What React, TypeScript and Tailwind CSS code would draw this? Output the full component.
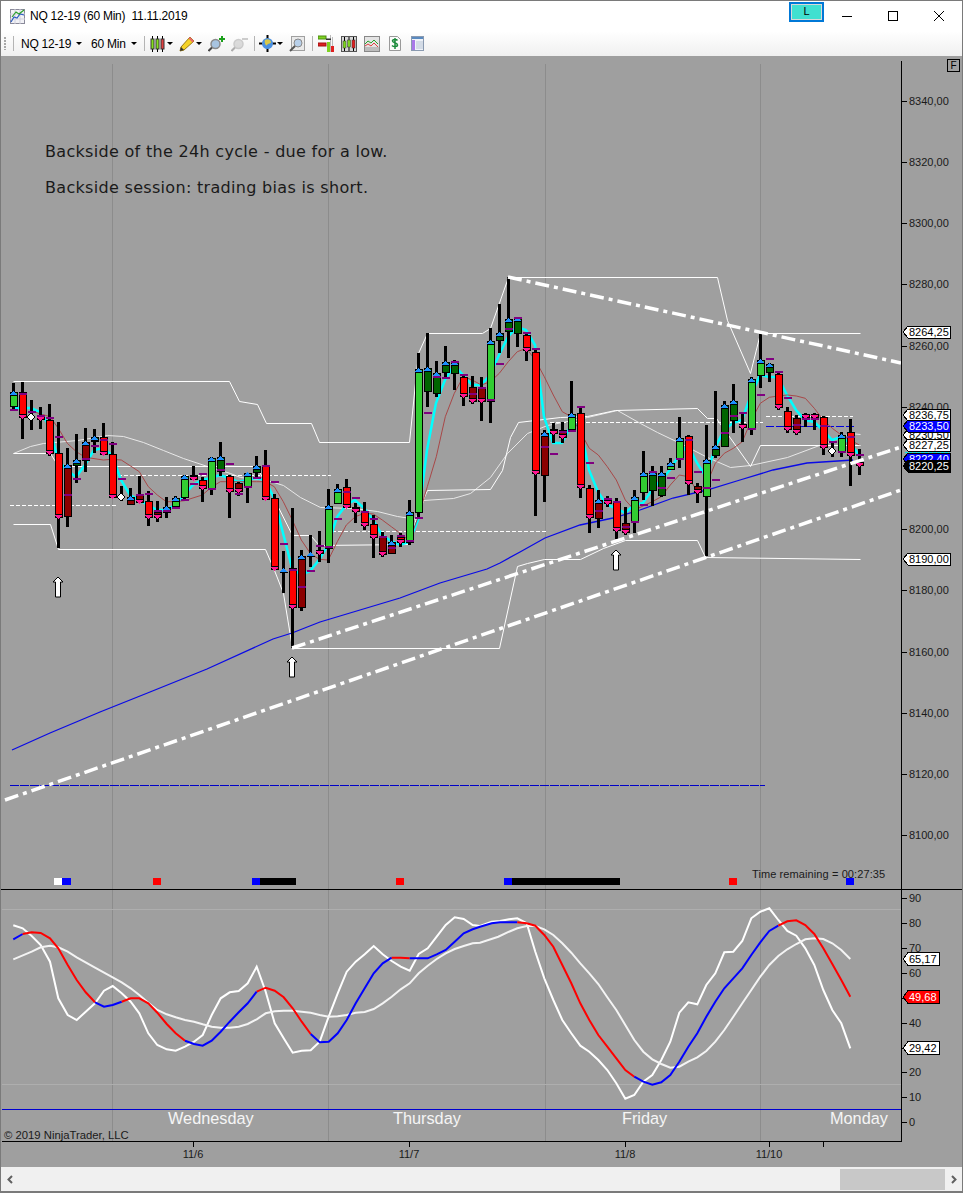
import React from 'react';

type Bar = [number, number, number, number, string, number];
type Pt = [number, number];

// [high, low, body top, body bottom, kind, purple dash y] in page pixels
// g green, G dark green, r red, R dark red, B dark red with up marker, d diamond, t tick only
const bars: Bar[] = [
  [383, 410, 392, 406, 'g', 410], [382, 439, 392, 417, 'r', 394], [400, 430, 417, 417, 'd', 412], [407, 429, 415, 419, 'r', 416],
  [404, 456, 420, 453, 'r', 418], [422, 548, 453, 517, 'r', 437], [448, 527, 465, 516, 'B', 495], [434, 483, 460, 465, 'G', 479],
  [428, 472, 442, 460, 'B', 459], [429, 453, 437, 441, 'G', 446], [423, 455, 437, 454, 'r', 440], [442, 497, 454, 497, 'r', 444],
  [486, 501, 497, 497, 'd', 479], [488, 504, 497, 504, 'B', 0], [476, 503, 495, 502, 'R', 495], [491, 526, 501, 517, 'r', 494],
  [501, 522, 512, 517, 'R', 511], [497, 518, 507, 512, 'G', 511], [496, 507, 498, 506, 'g', 508], [475, 501, 476, 497, 'g', 500],
  [466, 480, 475, 479, 'r', 484], [477, 502, 480, 488, 'r', 474], [457, 495, 458, 488, 'g', 489], [442, 476, 457, 471, 'G', 470],
  [475, 518, 476, 491, 'r', 464], [482, 496, 483, 491, 'R', 494], [473, 503, 473, 486, 'g', 487], [456, 477, 466, 472, 'G', 478],
  [450, 499, 466, 499, 'r', 466], [494, 570, 498, 569, 'r', 482], [551, 593, 569, 571, 't', 544], [508, 648, 568, 607, 'r', 570],
  [550, 611, 556, 607, 'B', 587], [535, 567, 553, 557, 't', 571], [531, 562, 550, 553, 'R', 546], [489, 563, 506, 548, 'g', 547],
  [484, 503, 489, 503, 'g', 519], [479, 508, 487, 507, 'r', 492], [503, 523, 507, 511, 'r', 498], [502, 530, 511, 525, 'r', 512],
  [515, 558, 524, 537, 'r', 519], [532, 557, 537, 554, 'R', 537], [535, 553, 542, 553, 'B', 548], [533, 547, 537, 542, 'r', 536],
  [500, 545, 512, 542, 'g', 541], [353, 517, 369, 512, 'g', 518], [333, 407, 368, 391, 'G', 413], [361, 397, 373, 393, 'G', 377],
  [346, 378, 362, 372, 'G', 378], [360, 390, 362, 373, 'G', 362], [375, 406, 377, 396, 'r', 375], [376, 404, 387, 401, 'R', 394],
  [377, 421, 387, 401, 'R', 388], [328, 423, 341, 401, 'g', 400], [304, 353, 333, 340, 'G', 364], [277, 358, 319, 331, 'G', 329],
  [317, 347, 318, 333, 'G', 318], [332, 361, 335, 350, 'r', 333], [350, 516, 352, 473, 'r', 349], [430, 502, 433, 475, 'B', 447],
  [423, 443, 429, 433, 'r', 454], [422, 443, 430, 437, 'R', 432], [381, 430, 414, 429, 'g', 431], [406, 498, 413, 487, 'r', 407],
  [485, 533, 488, 517, 'r', 463], [490, 528, 500, 518, 'B', 511], [496, 507, 499, 503, 'r', 499], [498, 539, 502, 530, 'r', 502],
  [507, 535, 523, 532, 'R', 527], [490, 533, 497, 522, 'g', 522], [451, 500, 473, 492, 'g', 505], [466, 506, 472, 490, 'G', 472],
  [466, 497, 473, 495, 'G', 488], [458, 470, 463, 469, 'g', 478], [417, 468, 438, 458, 'g', 459], [435, 495, 436, 483, 'r', 440],
  [483, 503, 486, 492, 'R', 472], [425, 556, 460, 496, 'g', 488], [391, 458, 446, 455, 'G', 480], [401, 447, 405, 446, 'G', 433],
  [384, 433, 401, 420, 'G', 416], [413, 442, 425, 427, 'r', 413], [377, 435, 379, 429, 'g', 429], [334, 388, 360, 375, 'g', 395],
  [363, 382, 364, 372, 'G', 359], [373, 410, 374, 407, 'r', 372], [407, 433, 411, 429, 'r', 398], [415, 435, 418, 432, 'R', 425],
  [413, 427, 414, 417, 'r', 419], [413, 430, 414, 417, 'r', 419], [416, 455, 417, 447, 'r', 426], [442, 457, 451, 451, 'd', 442],
  [432, 457, 435, 452, 'g', 452], [419, 486, 432, 455, 'r', 437], [449, 475, 462, 465, 'r', 455],
];

const barX = (i: number) => 13 + i * 9;

const z3 = (a: number[]): Pt[] => pairs(a).map(([x, y]) => [x / 3, 370 + y / 3]);
const z4 = (a: number[]): Pt[] => pairs(a).map(([x, y]) => [320 + x / 3, 270 + y / 3]);
const z5 = (a: number[]): Pt[] => pairs(a).map(([x, y]) => [640 + x / 3, 320 + y / 3]);
const o6 = (a: number[]): Pt[] => pairs(a).map(([x, y]) => [x / 3, 860 + y / 3]);
const o7 = (a: number[]): Pt[] => pairs(a).map(([x, y]) => [480 + x / 3, 860 + y / 3]);

function pairs(a: number[]): Pt[] {
  const out: Pt[] = [];
  for (let i = 0; i < a.length; i += 2) out.push([a[i], a[i + 1]]);
  return out;
}

const d = (p: Pt[]) => p.map(([x, y]) => `${x.toFixed(1)},${y.toFixed(1)}`).join(' ');

const cyan: Pt[] = [
  [13, 408], [22, 408], [31, 408], [40, 412], [49, 425], [58, 460], [67, 470], [76, 477], [85, 465], [94, 450], [103, 448], [112, 455],
  [121, 480], [130, 495], [139, 500], [148, 505], [157, 510], [166, 510], [175, 505], [184, 495], [193, 485], [202, 480], [211, 478],
  [220, 475], [229, 478], [238, 482], [247, 480], [256, 478], [265, 480], [274, 498], [283, 533], [292, 568], [301, 575], [310, 571],
  [319, 560], [328, 545], [337, 517], [346, 505], [355, 500], [364, 508], [373, 520], [382, 535], [391, 541], [400, 545], [409, 542],
  [418, 520], [427, 450], [436, 403], [445, 380], [454, 365], [463, 375], [472, 385], [481, 385], [490, 375], [499, 355], [508, 337],
  [517, 327], [526, 330], [535, 345], [544, 417], [553, 443], [562, 443], [571, 425], [580, 425], [589, 470], [598, 492], [607, 505],
  [616, 508], [625, 513], [634, 505], [643, 503], [652, 490], [661, 480], [670, 470], [679, 455], [688, 445], [697, 463], [706, 477],
  [715, 448], [724, 430], [733, 423], [742, 420], [751, 395], [760, 375], [769, 377], [778, 377], [787, 395], [796, 410], [805, 420],
  [814, 422], [823, 430], [832, 440], [841, 437], [850, 443], [859, 455],
];

const brown: Pt[] = [
  ...z3([100, 125, 150, 140, 175, 175, 202, 220, 229, 245, 256, 262, 310, 270, 337, 268, 364, 270, 418, 305, 445, 350, 472, 375, 499, 395, 526, 395, 553, 392, 607, 375, 634, 352, 661, 335, 688, 335, 769, 335, 796, 335, 823, 350, 850, 395, 877, 450, 904, 510, 931, 550, 958, 568]),
  ...z4([25, 870, 52, 815, 79, 765, 106, 740, 133, 730, 160, 732, 187, 750, 214, 770, 241, 790, 268, 812, 295, 740, 322, 650, 349, 560, 376, 440, 403, 370, 430, 320, 457, 330, 484, 345, 511, 335, 538, 310, 565, 275, 592, 245, 619, 235, 646, 270, 673, 320, 700, 375, 727, 425, 754, 440, 781, 485, 808, 535, 835, 555, 862, 590, 889, 630, 916, 690, 943, 720]),
  ...z5([37, 545, 64, 530, 91, 495, 118, 465, 145, 470, 172, 515, 199, 495, 226, 430, 253, 400, 280, 385, 307, 365, 334, 300, 361, 250, 388, 232, 415, 228, 442, 225, 469, 228, 496, 235, 523, 265, 550, 300, 577, 325, 604, 345, 631, 360, 658, 375]),
];

const blueMa: Pt[] = [
  [12, 750], [50, 733], [100, 712], [150, 692], [207, 669], [273, 639], [292, 633], [320, 622], [400, 598], [440, 583], [487, 569], [500, 563],
  [520, 552], [545, 538], [580, 525], [613, 518], [640, 510], [673, 498], [707, 490], [740, 480], [773, 470], [807, 463], [853, 460],
];

const bandTop: Pt[] = [[13, 381], [229, 381], [239, 401], [257, 404], [266, 423], [311, 423], [319, 442], [409, 442], [418, 353], [427, 333], [482, 333], [490, 328], [508, 277], [717, 277], [727, 320], [750, 373], [760, 333], [860, 333]];
const bandLow: Pt[] = [[13, 524], [50, 524], [58, 549], [265, 549], [274, 570], [283, 593], [292, 648], [499, 648], [517, 566], [527, 563], [544, 559], [580, 559], [603, 548], [625, 540], [697, 540], [705, 557], [860, 559]];
const bandMid: Pt[] = [[13, 453], [50, 453], [58, 466], [256, 466], [272, 495], [292, 535], [310, 535], [319, 545], [409, 544], [418, 510], [427, 490], [490, 489], [502, 470], [510, 437], [518, 422], [560, 417], [587, 416], [615, 410], [697, 408], [707, 418], [716, 418], [750, 466], [760, 445], [860, 445]];
const bandSmooth: Pt[] = [[13, 453], [30, 446], [43, 443], [77, 440], [107, 435], [123, 436], [143, 442], [163, 450], [183, 458], [210, 467], [230, 473], [240, 477], [267, 480], [283, 485], [300, 497], [320, 507], [353, 508], [377, 511], [397, 516], [417, 519], [423, 500], [453, 498], [470, 493], [490, 477], [507, 453], [527, 433], [547, 425], [587, 417], [617, 410], [640, 423], [657, 432], [680, 443], [707, 457], [730, 467], [750, 465], [787, 457], [827, 442], [850, 433], [860, 434]];

const fast: Pt[] = [
  ...o6([40, 196, 68, 205, 95, 228, 122, 255, 150, 305, 175, 415, 203, 465, 230, 480, 257, 455, 285, 430, 312, 392, 338, 378, 365, 400, 392, 425, 418, 460, 445, 520, 472, 555, 500, 568, 527, 572, 555, 560, 582, 545, 608, 525, 635, 465, 662, 415, 689, 397, 716, 393, 743, 370, 770, 320, 797, 395, 824, 490, 851, 535, 878, 578, 905, 572, 932, 571, 959, 545, 986, 470, 1013, 400, 1040, 335, 1067, 305, 1094, 283, 1121, 258, 1148, 283, 1175, 303, 1202, 320, 1229, 332, 1256, 282, 1283, 265, 1310, 230, 1337, 195, 1364, 172, 1391, 177, 1418, 195]),
  ...o7([0, 198, 35, 185, 60, 183, 87, 178, 112, 175, 140, 190, 166, 275, 193, 355, 220, 420, 247, 480, 274, 520, 301, 557, 328, 575, 355, 600, 382, 630, 409, 670, 436, 716, 463, 705, 490, 665, 517, 645, 544, 600, 571, 545, 598, 458, 625, 427, 652, 433, 679, 375, 706, 340, 733, 277, 760, 275, 787, 243, 814, 175, 841, 155, 868, 145, 895, 180, 922, 213, 949, 227, 976, 265, 1003, 315, 1030, 390, 1057, 450, 1084, 490, 1111, 565]),
];

const slow: Pt[] = [
  ...o6([40, 298, 95, 275, 122, 262, 150, 257, 175, 262, 203, 275, 230, 292, 285, 323, 338, 352, 365, 367, 392, 385, 418, 405, 445, 428, 472, 450, 500, 463, 527, 472, 555, 480, 582, 485, 608, 493, 635, 500, 662, 503, 689, 503, 716, 500, 743, 492, 770, 478, 797, 460, 824, 454, 851, 452, 878, 452, 905, 455, 932, 458, 959, 465, 986, 470, 1013, 469, 1040, 465, 1067, 458, 1094, 456, 1121, 447, 1148, 430, 1175, 410, 1202, 388, 1229, 370, 1256, 340, 1283, 317, 1310, 297, 1337, 280, 1364, 267, 1391, 258, 1418, 250]),
  ...o7([0, 248, 55, 230, 87, 215, 112, 205, 140, 198, 166, 198, 193, 208, 220, 225, 247, 250, 274, 278, 301, 310, 328, 340, 355, 372, 382, 412, 409, 450, 436, 495, 463, 540, 490, 575, 517, 598, 544, 612, 571, 623, 598, 620, 625, 605, 652, 592, 679, 573, 706, 545, 733, 510, 760, 470, 787, 430, 814, 390, 841, 350, 868, 315, 895, 288, 922, 268, 949, 252, 976, 238, 1003, 235, 1030, 237, 1057, 250, 1084, 270, 1111, 297]),
];

const RED = '#ff0000';
const BLUE = '#0000ff';
const signal: { c: string; p: Pt[] }[] = [
  { c: BLUE, p: o6([40, 238, 68, 222]) },
  { c: RED, p: o6([68, 222, 95, 217, 122, 219, 150, 235, 175, 265, 203, 315, 230, 360, 257, 397, 285, 427]) },
  { c: BLUE, p: o6([285, 427, 312, 440, 338, 435, 365, 425]) },
  { c: RED, p: o6([365, 425, 392, 415, 418, 415, 445, 430, 472, 458, 500, 492, 527, 520, 555, 542]) },
  { c: BLUE, p: o6([555, 542, 582, 552, 608, 557, 635, 542, 662, 515, 689, 485, 716, 457, 743, 430, 770, 395]) },
  { c: RED, p: o6([770, 395, 797, 383, 824, 392, 851, 412, 878, 445, 905, 485, 932, 522]) },
  { c: BLUE, p: o6([932, 522, 959, 547, 986, 545, 1013, 520, 1040, 480, 1067, 430, 1094, 385, 1121, 340, 1148, 310, 1175, 293]) },
  { c: RED, p: o6([1175, 293, 1202, 293, 1229, 295]) },
  { c: BLUE, p: [...o6([1229, 295, 1256, 295, 1283, 295, 1310, 283, 1337, 270, 1364, 245, 1391, 220, 1418, 208]), ...o7([0, 200, 35, 190, 60, 187, 87, 187, 112, 187])] },
  { c: RED, p: o7([112, 187, 140, 190, 166, 197, 193, 225, 220, 260, 247, 315, 274, 370, 301, 430, 328, 480, 355, 525, 382, 560, 409, 595, 436, 630, 463, 650]) },
  { c: BLUE, p: o7([463, 650, 490, 665, 517, 674, 544, 667, 571, 645, 598, 605, 625, 560, 652, 520, 679, 470, 706, 425, 733, 385, 760, 355, 787, 325, 814, 285, 841, 247, 868, 213, 895, 197]) },
  { c: RED, p: o7([895, 197, 922, 184, 949, 181, 976, 195, 1003, 222, 1030, 265, 1057, 312, 1084, 360, 1111, 410]) },
];

const priceLabels = [[8340, 101], [8320, 162], [8300, 223], [8280, 284], [8260, 346], [8240, 407], [8200, 529], [8180, 590], [8160, 652], [8140, 713], [8120, 774], [8100, 835]];
const oscLabels = [[90, 898], [80, 923], [70, 948], [60, 973], [40, 1023], [20, 1072], [10, 1097], [0, 1122]];
const gridX = [112, 328, 545, 760];
const strip = [
  [54, 8, '#ffffff'], [62, 9, '#0000ff'], [153, 8, '#ff0000'], [252, 8, '#0000ff'], [260, 36, '#000000'], [396, 8, '#ff0000'],
  [504, 8, '#0000ff'], [512, 108, '#000000'], [729, 8, '#ff0000'], [846, 8, '#0000ff'],
] as const;

const bodyFill: Record<string, string> = { g: '#32cd32', G: '#006400', r: '#ff0000', R: '#8b0000', B: '#8b0000' };

function Candle({ bar, i }: { bar: Bar; i: number }) {
  const [hi, lo, top, bot, kind, purple] = bar;
  const x = barX(i);
  const up = kind === 'g' || kind === 'G' || kind === 'B' || kind === 't';
  return (
    <g shapeRendering="crispEdges">
      <rect x={x - 1} y={hi} width={3} height={lo - hi} fill="#000" />
      {bodyFill[kind] && <rect x={x - 3} y={top} width={7} height={bot - top} fill={bodyFill[kind]} stroke="#000" />}
      {kind === 'd' && <polygon points={`${x},${top - 4} ${x + 4},${top} ${x},${top + 4} ${x - 4},${top}`} fill="#fff" stroke="#000" shapeRendering="auto" />}
      {kind !== 'd' && up && (
        <>
          <polygon points={`${x - 3},${top + 3} ${x + 4},${top + 3} ${x + 0.5},${top - 1}`} fill="#1e90ff" />
          <rect x={x - 3} y={top + 3} width={8} height={1} fill="#000" />
        </>
      )}
      {kind !== 'd' && !up && (
        <>
          <polygon points={`${x - 3},${bot - 2} ${x + 4},${bot - 2} ${x + 0.5},${bot + 2}`} fill="#ff1493" />
          <rect x={x - 3} y={bot - 3} width={8} height={1} fill="#000" />
        </>
      )}
      {purple > 0 && <rect x={x - 3} y={purple - 1} width={8} height={2} fill="#800080" />}
    </g>
  );
}

function UpArrow({ x, y }: { x: number; y: number }) {
  return <polygon points={`${x},${y} ${x + 5},${y + 5} ${x + 2.5},${y + 5} ${x + 2.5},${y + 20} ${x - 2.5},${y + 20} ${x - 2.5},${y + 5} ${x - 5},${y + 5}`} fill="#fff" stroke="#000" />;
}

function Flag({ y, h = 12, fill = '#fff', color = '#000', text, right = 950 }: { y: number; h?: number; fill?: string; color?: string; text: string; right?: number }) {
  return (
    <g>
      <polygon points={`903,${y} 908,${y - h / 2} ${right},${y - h / 2} ${right},${y + h / 2} 908,${y + h / 2}`} fill={fill} stroke="#000" shapeRendering="crispEdges" />
      <text x={909} y={y + 4} fontSize={11} fill={color}>{text}</text>
    </g>
  );
}

function Caret() {
  return <span className="w-0 h-0 border-x-[3px] border-x-transparent border-t-[3px] border-t-black" />;
}

function Separator({ className }: { className: string }) {
  return <span className={`w-px h-[15px] bg-[#b4b4b4] ${className}`} />;
}

function Magnifier({ plus, dim }: { plus?: boolean; dim?: boolean }) {
  return (
    <svg width="17" height="17" viewBox="0 0 17 17" className={dim ? 'opacity-40' : ''}>
      <circle cx="7.5" cy="9" r="4.5" fill={dim ? '#b0b0b0' : '#a8c4e0'} stroke="#8a8a8a" strokeWidth="1.5" />
      <line x1="4" y1="12.5" x2="0.5" y2="16" stroke="#444" strokeWidth="2" />
      {plus ? <path d="M11 4h6M14 1v6" stroke="#1aa01a" strokeWidth="2" /> : <path d="M11 4h6" stroke="#888" strokeWidth="2" />}
    </svg>
  );
}

const Icons = {
  title: (
    <svg width="15" height="15" viewBox="0 0 15 15">
      <rect x="0.5" y="0.5" width="14" height="14" fill="#f2f2f6" stroke="#8a8a9a" />
      <path d="M0 5h15M0 10h15M5 0v15M10 0v15" stroke="#d0d0dc" />
      <path d="M1 13 4 8 7 9 10 5 14 6" fill="none" stroke="#2a5bc0" strokeWidth="1.2" />
      <path d="M2 8 6 3 9 5 14 1" fill="none" stroke="#2aa02a" strokeWidth="1.2" />
    </svg>
  ),
  candles: (
    <svg width="15" height="16" viewBox="0 0 15 16">
      <path d="M2.500 0v16M7.500 0v16M12.500 0v16" stroke="#000" />
      <rect x="1" y="3" width="3" height="10" fill="#86e01e" stroke="#333" />
      <rect x="6" y="3" width="3" height="10" fill="#86e01e" stroke="#333" />
      <rect x="11" y="3" width="3" height="10" fill="#e04040" stroke="#333" />
    </svg>
  ),
  pencil: (
    <svg width="16" height="16" viewBox="0 0 16 16">
      <polygon points="11,1 15,5 5,14 1,15 2,11" fill="#f5d327" stroke="#9a7a10" />
      <polygon points="2,11 5,14 1,15" fill="#333" />
      <polygon points="11,1 15,5 13.5,6.5 9.5,2.5" fill="#e86a6a" />
    </svg>
  ),
  globe: (
    <svg width="17" height="17" viewBox="0 0 17 17">
      <path d="M8.5 0v17M0 8.5h17" stroke="#000" strokeWidth="2" />
      <circle cx="8.5" cy="8.5" r="5.5" fill="#4a90e2" />
      <path d="M6 5c3-2 6 0 6 2s-3 1-4 3-3-3-2-5z" fill="#d8c84a" />
    </svg>
  ),
  lens: (
    <svg width="16" height="16" viewBox="0 0 16 16">
      <rect x="2.5" y="0.5" width="13" height="14" fill="#eaeaea" stroke="#a0a0a0" />
      <circle cx="9" cy="7" r="4" fill="#b8d0ea" stroke="#8a8a8a" />
      <line x1="6" y1="10" x2="1" y2="15" stroke="#555" strokeWidth="2" />
    </svg>
  ),
  bars: (
    <svg width="16" height="17" viewBox="0 0 16 17">
      <path d="M12.5 0v17M14.5 2v14" stroke="#bbb" />
      <rect x="0" y="1" width="8" height="3" fill="#7ed321" stroke="#4a8a10" />
      <rect x="8" y="3.5" width="5" height="1.5" fill="#333" />
      <rect x="0" y="8" width="8" height="3" fill="#e02020" stroke="#a01010" />
      <rect x="9" y="7" width="3" height="10" fill="#7ed321" />
      <rect x="13" y="11" width="3" height="6" fill="#e02020" />
    </svg>
  ),
  frame: (
    <svg width="16" height="16" viewBox="0 0 16 16">
      <rect x="0.5" y="0.5" width="15" height="15" fill="#d8d8d8" stroke="#555" />
      <path d="M3.5 1v14M8 1v14M12.5 1v14" stroke="#000" />
      <rect x="2" y="5" width="3" height="7" fill="#7ed321" stroke="#333" strokeWidth="0.5" />
      <rect x="6.5" y="4" width="3" height="7" fill="#7ed321" stroke="#333" strokeWidth="0.5" />
      <rect x="11" y="4" width="3" height="8" fill="#e02020" stroke="#333" strokeWidth="0.5" />
    </svg>
  ),
  lines: (
    <svg width="16" height="16" viewBox="0 0 16 16">
      <rect x="0.5" y="0.5" width="15" height="15" fill="#e4e4e4" stroke="#888" />
      <rect x="1" y="11" width="14" height="4" fill="#bdbdbd" />
      <path d="M1 8 4 5 7 7 10 4 14 8" fill="none" stroke="#2aa02a" />
      <path d="M1 10 4 8 7 10 10 7 14 11" fill="none" stroke="#e04040" />
    </svg>
  ),
  dollar: (
    <svg width="12" height="15" viewBox="0 0 12 15">
      <path d="M0.5 0.5h8l3 3v11h-11z" fill="#fafafa" stroke="#999" />
      <path d="M8.5 4.5c-1-1.5-5-1.5-5 .5s5 1.500 5 4c0 2-4 2-5.500.5M6 2v11" fill="none" stroke="#1a8a3a" strokeWidth="1.5" />
    </svg>
  ),
  sheet: (
    <svg width="13" height="15" viewBox="0 0 13 15">
      <rect x="0.5" y="0.5" width="12" height="14" fill="#eef2f8" stroke="#8a9ab0" />
      <rect x="1" y="1" width="11" height="2" fill="#5a8ac0" />
      <rect x="1" y="4" width="3" height="10" fill="#a878e8" />
      <path d="M5 6h7M5 8h7M5 10h7M5 12h7" stroke="#b8c4d4" />
    </svg>
  ),
};

const App: React.FC = () => {
  return (
    <div className="relative w-[963px] h-[1193px] flex flex-col overflow-hidden border border-[#7a7a7a] border-b-2 bg-white text-black font-['Liberation_Sans',Arial,sans-serif]">
      {/* Title bar */}
      <div className="h-[30px] flex items-center bg-white">
        <span className="ml-[9px]">{Icons.title}</span>
        <span className="ml-[5px] text-[12px] tracking-[-0.24px] whitespace-pre">NQ 12-19 (60 Min)  11.11.2019</span>
        <span className="ml-auto mr-[138px] w-[35px] h-[20px] -mt-[9px] border-[2px] border-[#0078d7] bg-[#40e0d0] flex items-center justify-center text-[11px] outline outline-1 -outline-offset-3 outline-[#d8d8d8]">L</span>
      </div>
      <div className="absolute top-0 right-0 h-[30px] flex items-center">
        <span className="w-[46px] flex justify-center"><span className="w-[10px] h-px bg-black" /></span>
        <span className="w-[46px] flex justify-center"><span className="w-[10px] h-[10px] border border-black" /></span>
        <span className="w-[46px] flex justify-center">
          <svg width="10" height="10" viewBox="0 0 10 10"><path d="M0 0 10 10M10 0 0 10" stroke="#000" /></svg>
        </span>
      </div>

      {/* Toolbar */}
      <div className="h-[25px] flex items-center bg-linear-to-b from-white to-[#f0f0f0] text-[12px] tracking-[-0.24px]">
        <span className="ml-[3px] w-[2px] h-[13px] bg-[repeating-linear-gradient(#a8a8a8_0,#a8a8a8_2px,transparent_2px,transparent_3px)]" />
        <Separator className="ml-[7px]" />
        <span className="ml-[7px]">NQ 12-19</span>
        <span className="ml-[5px] flex"><Caret /></span>
        <span className="ml-[9px]">60 Min</span>
        <span className="ml-[5px] flex"><Caret /></span>
        <Separator className="ml-[7px]" />
        <span className="ml-[5px] flex">{Icons.candles}</span>
        <span className="ml-[2px] flex"><Caret /></span>
        <span className="ml-[6px] flex">{Icons.pencil}</span>
        <span className="ml-[1px] flex"><Caret /></span>
        <span className="ml-[6px] flex"><Magnifier plus /></span>
        <span className="ml-[6px] flex"><Magnifier dim /></span>
        <Separator className="ml-[6px]" />
        <span className="ml-[4px] flex">{Icons.globe}</span>
        <span className="ml-[1px] flex"><Caret /></span>
        <span className="ml-[6px] flex">{Icons.lens}</span>
        <Separator className="ml-[7px]" />
        <span className="ml-[5px] flex">{Icons.bars}</span>
        <span className="ml-[7px] flex">{Icons.frame}</span>
        <span className="ml-[7px] flex">{Icons.lines}</span>
        <span className="ml-[9px] flex">{Icons.dollar}</span>
        <span className="ml-[10px] flex">{Icons.sheet}</span>
      </div>

      {/* Price panel */}
      <div className="relative flex h-[833px] bg-[#9f9f9f]">
        <svg width={900} height={833} viewBox="1 56 900 833" className="block shrink-0">
          {gridX.map(x => <line key={x} x1={x + 0.5} x2={x + 0.5} y1={64} y2={889} stroke="#8c8c8c" shapeRendering="crispEdges" />)}
          <g transform="translate(0.5 0.5)" fill="none">
            <polyline points={d(bandSmooth)} stroke="#e8e8e8" />
            <polyline points={d(bandTop)} stroke="#ffffff" />
            <polyline points={d(bandLow)} stroke="#ffffff" />
            <polyline points={d(bandMid)} stroke="#ffffff" />
          </g>
          <path d="M10 505.500H116M118 475.500H331M332 531.500H548M550 422.500H763M766 416.500H853" stroke="#fff" strokeDasharray="4 2" shapeRendering="crispEdges" />
          <line x1={766} x2={855} y1={426.5} y2={426.5} stroke="#0000e0" strokeDasharray="8 2" shapeRendering="crispEdges" />
          <line x1={10} x2={765} y1={785.5} y2={785.5} stroke="#0000c8" strokeDasharray="9 1" shapeRendering="crispEdges" />
          <polyline points={d(blueMa)} fill="none" stroke="#0a0ae6" strokeWidth={1.3} />
          <polyline points={d(cyan)} fill="none" stroke="#00ffff" strokeWidth={2.5} />
          <polyline points={d(brown)} fill="none" stroke="#a84848" />
          {bars.map((b, i) => <Candle key={i} bar={b} i={i} />)}
          <g stroke="#fff" strokeWidth={3.5} strokeDasharray="14 5 4 5">
            <line x1={292} y1={648} x2={901} y2={447} />
            <line x1={5} y1={800} x2={901} y2={490} />
            <line x1={508} y1={277} x2={901} y2={363} />
          </g>
          <UpArrow x={58} y={577} />
          <UpArrow x={292} y={657} />
          <UpArrow x={616} y={550} />
          {strip.map(([x, w, c]) => <rect key={x} x={x} y={878} width={w} height={7} fill={c} shapeRendering="crispEdges" />)}
        </svg>
        <svg width={61} height={833} viewBox="901 56 61 833" className="block shrink-0">
          <line x1={901.5} x2={901.5} y1={61} y2={889} stroke="#000" />
          {priceLabels.map(([v, y]) => (
            <g key={v}>
              <line x1={901} x2={907} y1={y + 0.5} y2={y + 0.5} stroke="#000" />
              <text x={909} y={y + 4} fontSize={11} fill="#1a1a1a">{`${v},00`}</text>
            </g>
          ))}
          <Flag y={332} text="8264,25" />
          <Flag y={559} text="8190,00" />
          <Flag y={415} text="8236,75" />
          <Flag y={435} text="8230,50" />
          <Flag y={426} fill="#0000ff" color="#fff" text="8233,50" />
          <Flag y={445} text="8227,25" />
          <line x1={905} x2={950} y1={452.5} y2={452.5} stroke="#00e5e5" strokeDasharray="3 1" />
          <Flag y={459} fill="#0000ff" color="#fff" text="8222,40" />
          <Flag y={466} fill="#000" color="#fff" text="8220,25" />
          <rect x={947.5} y={59.5} width={12} height={12} fill="none" stroke="#000" shapeRendering="crispEdges" />
          <text x={953.500} y={69} fontSize={10} textAnchor="middle">F</text>
        </svg>

        <div className="absolute left-[44px] top-[86px] flex flex-col gap-[16px] text-[16px] leading-[20px] tracking-[0.31px] text-[#1a1a1a] font-['DejaVu_Sans',sans-serif]">
          <p>Backside of the 24h cycle - due for a low.</p>
          <p>Backside session: trading bias is short.</p>
        </div>
        <span className="absolute left-[751px] top-[811px] text-[11px] leading-[14px] tracking-[0.1px] text-[#1a1a1a]">Time remaining = 00:27:35</span>
      </div>

      {/* Oscillator panel */}
      <div className="relative flex h-[252px] border-t border-black bg-[#9f9f9f]">
        <svg width={900} height={251} viewBox="1 890 900 251" className="block shrink-0">
          {gridX.map(x => <line key={x} x1={x + 0.5} x2={x + 0.5} y1={890} y2={1141} stroke="#8c8c8c" shapeRendering="crispEdges" />)}
          <g stroke="#aeaeae" shapeRendering="crispEdges">
            <line x1={2} x2={901} y1={909.5} y2={909.5} />
            <line x1={2} x2={901} y1={1084.5} y2={1084.5} />
          </g>
          <line x1={2} x2={901} y1={1109.5} y2={1109.5} stroke="#0000d0" shapeRendering="crispEdges" />
          <polyline points={d(fast)} fill="none" stroke="#fff" strokeWidth={2} />
          <polyline points={d(slow)} fill="none" stroke="#f4f4f4" strokeWidth={2} />
          {signal.map((s, i) => <polyline key={i} points={d(s.p)} fill="none" stroke={s.c} strokeWidth={2} />)}
        </svg>
        <svg width={61} height={251} viewBox="901 890 61 251" className="block shrink-0">
          <line x1={901.5} x2={901.5} y1={890} y2={1141} stroke="#000" />
          {[...oscLabels, [50, 998], [30, 1048]].map(([v, y]) => (
            <line key={v} x1={901} x2={907} y1={y + 0.5} y2={y + 0.5} stroke="#000" />
          ))}
          {oscLabels.map(([v, y]) => (
            <text key={v} x={909} y={y + 4} fontSize={11} fill="#1a1a1a">{v}</text>
          ))}
          <Flag y={959} h={13} text="65,17" right={939} />
          <Flag y={997} h={13} fill="#ff0000" color="#fff" text="49,68" right={939} />
          <Flag y={1048} h={13} text="29,42" right={939} />
        </svg>

        <span className="absolute left-[167px] top-[219px] text-[16.3px] leading-[18px] text-white/90">Wednesday</span>
        <span className="absolute left-[392px] top-[219px] text-[16.3px] leading-[18px] text-white/90">Thursday</span>
        <span className="absolute left-[621px] top-[219px] text-[16.3px] leading-[18px] text-white/90">Friday</span>
        <span className="absolute left-[829px] top-[219px] text-[16.3px] leading-[18px] text-white/90">Monday</span>
        <span className="absolute left-[3px] top-[239px] text-[11.3px] leading-[12px] text-[#1a1a1a]">© 2019 NinjaTrader, LLC</span>
      </div>

      {/* Time axis */}
      <div className="h-[26px] bg-[#9f9f9f]">
        <svg width={961} height={26} viewBox="1 1141 961 26" className="block">
          <line x1={2} x2={902} y1={1141.5} y2={1141.5} stroke="#000" />
          {[193, 409, 625, 769, 823].map(x => <line key={x} x1={x + 0.5} x2={x + 0.5} y1={1141} y2={1147} stroke="#000" />)}
          {[[193, '11/6'], [409, '11/7'], [625, '11/8'], [769, '11/10']].map(([x, t]) => (
            <text key={t} x={x} y={1158} fontSize={11} textAnchor="middle" fill="#1a1a1a">{t}</text>
          ))}
        </svg>
      </div>

      {/* Scrollbar */}
      <div className="flex-1 flex items-center bg-[#f0f0f0] text-[#606060]">
        <svg width="6" height="9" viewBox="0 0 6 9" className="ml-[6px]"><path d="M5 1 1.500 4.500 5 8" fill="none" stroke="#606060" strokeWidth="2" /></svg>
        <span className="ml-auto w-[105px] h-[21px] bg-[#c8c8c8]" />
        <svg width="6" height="9" viewBox="0 0 6 9" className="ml-[6px] mr-[5px]"><path d="M1 1 4.500 4.500 1 8" fill="none" stroke="#606060" strokeWidth="2" /></svg>
      </div>
    </div>
  );
};

export default App;
